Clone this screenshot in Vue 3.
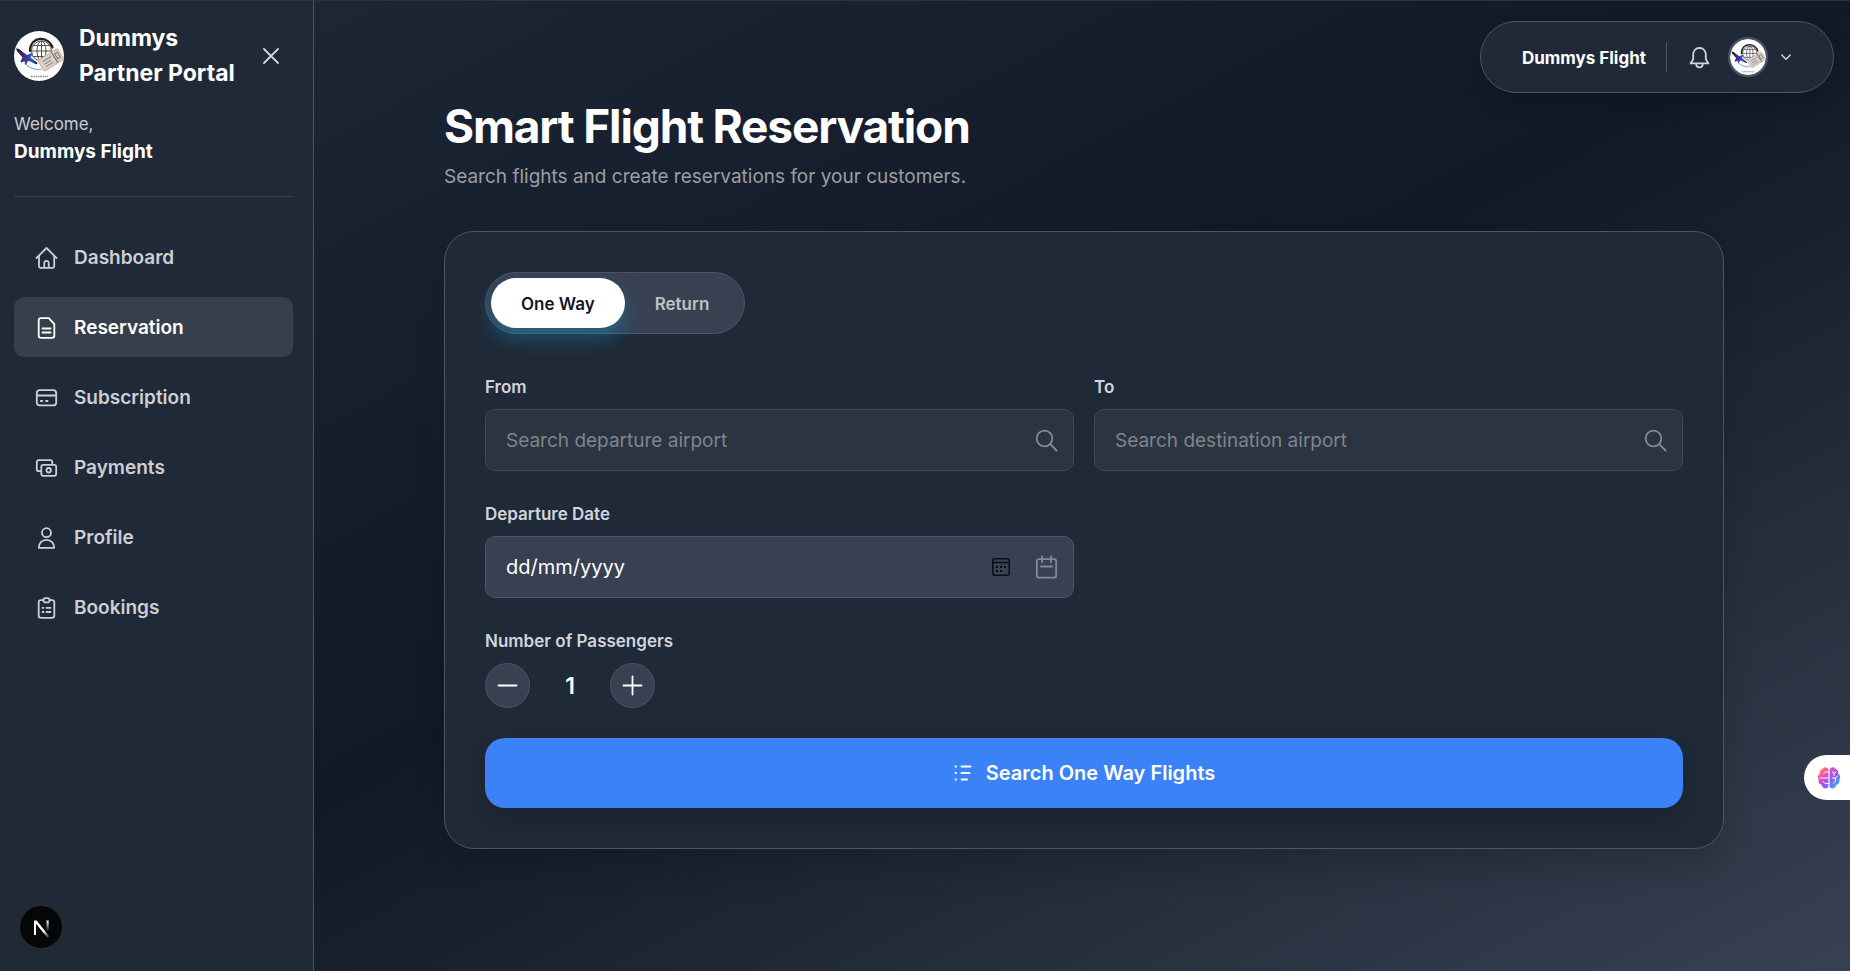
<template>
    <div class="page">
        <aside class="sidebar">
            <div class="brand">
                <svg class="logo" viewBox="0 0 50 50"><use href="#partner-logo" /></svg>
                <div class="brandname">Dummys Partner Portal</div>
                <button class="close" type="button" aria-label="Close menu">
                    <svg width="16" height="16" viewBox="0 0 16 16"><path d="M1 1l14 14M15 1L1 15" /></svg>
                </button>
            </div>
            <div class="welcome">
                <div>Welcome,</div>
                <strong>{{ username }}</strong>
            </div>
            <nav class="menu">
                <a v-for="item in items" :key="item.label" href="#" class="menuitem" :class="{ active: item.label == current }" @click.prevent="current = item.label">
                    <svg width="25" height="25" viewBox="0 0 25 25"><path v-for="d in item.paths" :key="d" :d="d" /></svg>
                    <span>{{ item.label }}</span>
                </a>
            </nav>
        </aside>

        <main class="content">
            <div class="inner">
                <h1>Smart Flight Reservation</h1>
                <p class="subtitle">Search flights and create reservations for your customers.</p>

                <form class="card" @submit.prevent>
                    <div class="toggle">
                        <button type="button" :class="{ selected: trip == 'One Way' }" @click="trip = 'One Way'">One Way</button>
                        <button type="button" :class="{ selected: trip == 'Return' }" @click="trip = 'Return'">Return</button>
                    </div>

                    <div class="fields">
                        <div class="field">
                            <label for="from">From</label>
                            <div class="box">
                                <input id="from" type="text" placeholder="Search departure airport" />
                                <svg width="25" height="25" viewBox="0 0 25 25"><circle cx="10.5" cy="10.5" r="7.8" /><path d="M16.2 16.2l6.3 6.3" /></svg>
                            </div>
                        </div>
                        <div class="field">
                            <label for="to">To</label>
                            <div class="box">
                                <input id="to" type="text" placeholder="Search destination airport" />
                                <svg width="25" height="25" viewBox="0 0 25 25"><circle cx="10.5" cy="10.5" r="7.8" /><path d="M16.2 16.2l6.3 6.3" /></svg>
                            </div>
                        </div>
                        <div class="field">
                            <label for="date">Departure Date</label>
                            <div class="box date">
                                <input id="date" type="text" placeholder="dd/mm/yyyy" />
                                <svg class="picker" width="20" height="20" viewBox="0 0 20 20">
                                    <rect x="1.800" y="1.800" width="16.400" height="16.400" rx="2" />
                                    <path d="M2 5.500h16" />
                                    <path class="dots" d="M5 9h2v2H5zM9 9h2v2H9zM13 9h2v2h-2zM5 13h2v2H5zM9 13h2v2H9z" />
                                </svg>
                                <svg width="25" height="25" viewBox="0 0 25 25"><rect x="2.8" y="4.2" width="19.4" height="18.4" rx="2" /><path d="M8 1.5v5.5M17 1.5v5.5M7 11.5h11" /></svg>
                            </div>
                        </div>
                    </div>

                    <div class="passengers" role="group" aria-labelledby="passengers-label">
                        <div id="passengers-label" class="label">Number of Passengers</div>
                        <div class="stepper">
                            <button type="button" aria-label="Remove passenger" @click="passengers > 1 && passengers--">
                                <svg width="21" height="21" viewBox="0 0 21 21"><path d="M1.5 10.5h18" /></svg>
                            </button>
                            <output>{{ passengers }}</output>
                            <button type="button" aria-label="Add passenger" @click="passengers++">
                                <svg width="21" height="21" viewBox="0 0 21 21"><path d="M1.5 10.5h18M10.5 1.5v18" /></svg>
                            </button>
                        </div>
                    </div>

                    <button class="submit" type="submit">
                        <svg width="20" height="20" viewBox="0 0 20 20"><path d="M2.5 3.5h.6M2.5 10h.6M2.5 16.5h.6M8.5 3.5h9M8.5 10h8M8.5 16.5h5.5" /></svg>
                        <span>Search {{ trip }} Flights</span>
                    </button>
                </form>
            </div>
        </main>

        <header class="account">
            <span class="accountname">{{ username }}</span>
            <button class="bell" type="button" aria-label="Notifications">
                <svg width="25" height="25" viewBox="0 0 25 25">
                    <path d="M12.5 3c-4 0-6.3 3-6.3 6.8v4.4L3.6 18.4h17.8l-2.6-4.2V9.8C18.8 6 16.5 3 12.5 3z" />
                    <path d="M9.2 18.6c0 2.4 1.4 3.8 3.3 3.8s3.3-1.4 3.3-3.8" />
                </svg>
            </button>
            <button class="profile" type="button" aria-label="Account menu">
                <svg class="avatar" viewBox="0 0 50 50"><use href="#partner-logo" /></svg>
                <svg class="chevron" width="10" height="8" viewBox="0 0 10 8"><path d="M.8 2L5 6.2 9.2 2" /></svg>
            </button>
        </header>

        <button class="assistant" type="button" aria-label="Assistant">
            <svg width="24" height="24" viewBox="0 0 24 24">
                <defs>
                    <linearGradient id="brain" x1="0" y1="0" x2="1" y2="1">
                        <stop offset="0.05" stop-color="#ff9a2e" />
                        <stop offset="0.3" stop-color="#f04fb0" />
                        <stop offset="0.55" stop-color="#9a55f7" />
                        <stop offset="0.95" stop-color="#27b4f5" />
                    </linearGradient>
                </defs>
                <path fill="url(#brain)" d="M11.4 3.2C10.4 .6 6.6 .4 5.5 3 3.2 3.4 2.2 5.6 2.9 7.5 .8 8.7 .2 11.8 1.7 13.5 .9 16 2.3 18.3 4.5 18.7 5 22 9.8 24.2 11.4 20.8zM12.6 3.2C13.6 .6 17.4 .4 18.5 3c2.3 .4 3.3 2.6 2.6 4.5 2.1 1.2 2.7 4.3 1.2 6 .8 2.5-.6 4.8-2.8 5.2-.5 3.3-5.3 5.5-6.9 2.1z" />
                <path class="folds" d="M11.4 6H8.5L6.5 8M3 12h8M11.4 17.5H8l-2-2M15.5 5.5l1.5 2 2-1.5M17 7.5v2M15.5 12h3l2-2M18.5 12v3l-2 2" />
            </svg>
        </button>

        <button class="devtools" type="button" aria-label="Open developer tools">
            <svg width="46" height="46" viewBox="0 0 46 46">
                <defs>
                    <linearGradient id="fade-a" x1="0" y1="0" x2="1" y2="1">
                        <stop offset="0.6" stop-color="#fff" />
                        <stop offset="1" stop-color="#fff" stop-opacity="0" />
                    </linearGradient>
                    <linearGradient id="fade-b" x1="0" y1="0" x2="0" y2="1">
                        <stop offset="0" stop-color="#fff" />
                        <stop offset="1" stop-color="#fff" stop-opacity="0" />
                    </linearGradient>
                </defs>
                <circle cx="23" cy="23" r="22" fill="#050608" stroke="#29292b" stroke-width="2" />
                <path fill="url(#fade-a)" d="M16 16.5h2.6l12.9 16-1.9 1.5L18 19.8V31h-2z" />
                <rect fill="url(#fade-b)" x="28.5" y="16.5" width="2.2" height="11" />
            </svg>
        </button>

        <!-- shared artwork: globe, plane and ticket -->
        <svg class="symbols" aria-hidden="true">
            <defs>
                <linearGradient id="plane" x1="0" y1="0" x2="1" y2="0">
                    <stop offset="0" stop-color="#161623" />
                    <stop offset="0.4" stop-color="#4a2b9b" />
                    <stop offset="0.75" stop-color="#2463b8" />
                    <stop offset="1" stop-color="#141c30" />
                </linearGradient>
            </defs>
            <symbol id="partner-logo" viewBox="0 0 50 50">
                <circle cx="25" cy="25" r="25" fill="#fdfdfd" />
                <g fill="none" stroke="#555" stroke-width="1">
                    <circle cx="27.5" cy="20" r="10" />
                    <ellipse cx="27.5" cy="20" rx="4.5" ry="10" />
                    <path d="M27.5 10v20M17.5 20h20M19 14.5h17M19 25.5h17" />
                    <path d="M16 20C16 4.5 35 4.5 38.5 16.5" stroke="#222" stroke-width="2.2" />
                </g>
                <path fill="url(#plane)" d="M2 17.5c2-.5 4 .8 5.5 2.5l5.5 4 4.5-2 1.5 .5-2.5 4 6.5 5c1 1.5 0 2-1.5 1.5l-6.5-3-1.5 .5-1.5 3.5-1-.5-.5-3.5-3 1.5-1-1 2-4L3 20z" />
                <path d="M12 33.5c4 3.5 9 5.5 15 5" fill="none" stroke="#5f87e8" stroke-width="1" stroke-dasharray="2 1" />
                <g transform="rotate(-32 36 28.5)" stroke-width="1">
                    <rect x="25" y="23" width="23" height="12.5" rx="1.5" fill="#d3d3d1" stroke="#f0a579" />
                    <path d="M29 26.5h9M29 29.5h7M29 32.5h8" stroke="#888" />
                    <path d="M41 24v11" stroke="#666" />
                    <rect x="43" y="26" width="3" height="6" fill="none" stroke="#777" />
                </g>
                <path d="M17 45.5h17" stroke="#888" stroke-width="1.5" stroke-linecap="butt" stroke-dasharray="1.5 .8" />
            </symbol>
        </svg>
    </div>
</template>

<script setup>
    import { ref } from 'vue';

    const username = "Dummys Flight";
    const current = ref("Reservation");
    const trip = ref("One Way");
    const passengers = ref(1);

    const items = [
        {
            label: "Dashboard",
            paths: [
                "M2.5 13L12.5 3l10 10",
                "M5 11.5V21q0 1.8 1.8 1.8H18.4q1.8 0 1.8-1.8V11.5",
                "M10.3 22.5V18a2.2 2.2 0 0 1 4.4 0v4.5"
            ]
        },
        {
            label: "Reservation",
            paths: [
                "M7 3.2h7.7l5.6 5.8v11.5q0 2.3-2.3 2.3H7q-2.3 0-2.3-2.3v-15Q4.7 3.2 7 3.2z",
                "M8.5 13.5h8M8.5 17.5h8"
            ]
        },
        {
            label: "Subscription",
            paths: [
                "M5.8 5.2h13.4q3 0 3 3v9.2q0 3-3 3H5.8q-3 0-3-3V8.2q0-3 3-3z",
                "M3 10.5h19M6.7 16h1.6M12 16h1.6"
            ]
        },
        {
            label: "Payments",
            paths: [
                "M18.3 9.5V7.2q0-2-2-2H4.8q-2 0-2 2v7q0 2 2 2H7",
                "M9.3 9.8h10.9q2 0 2 2v7q0 2-2 2H9.3q-2 0-2-2v-7q0-2 2-2z",
                "M14.7 13a2.2 2.2 0 1 1 0 4.5a2.2 2.2 0 1 1 0-4.5"
            ]
        },
        {
            label: "Profile",
            paths: [
                "M12.5 3.2a4.5 4.5 0 1 1 0 9a4.5 4.5 0 1 1 0-9",
                "M4.8 22.8c0-4.5 3-8 7.7-8s7.7 3.5 7.7 8z"
            ]
        },
        {
            label: "Bookings",
            paths: [
                "M9.5 5.2H7q-2.3 0-2.3 2.3v13q0 2.3 2.3 2.3h11q2.3 0 2.3-2.3v-13q0-2.3-2.3-2.3h-2.5",
                "M11.5 3.2h2a2 2 0 0 1 0 4.2h-2a2 2 0 0 1 0-4.2z",
                "M8.5 12.8h1M12.5 12.8h4M8.5 17h1M12.5 17h4"
            ]
        }
    ];
</script>

<style>
    body {
        margin: 0;
        background: #111827;
    }
</style>

<style scoped>
    * {
        box-sizing: border-box;
    }

    .page {
        position: relative;
        display: flex;
        min-height: 100vh;
        border-top: 1px solid #333333;
        background: linear-gradient(to bottom right, #1f2937, #111827, #374151);
        color: #ffffff;
        font-family: Inter, "Liberation Sans", sans-serif;
        font-size: 19px;
    }

    svg {
        display: block;
        flex: none;
        fill: none;
        stroke: currentColor;
        stroke-width: 1.8;
        stroke-linejoin: round;
        stroke-linecap: round;
    }

    button {
        padding: 0;
        border: 0;
        background: none;
        color: inherit;
        font: inherit;
        cursor: pointer;
    }

    .symbols {
        position: absolute;
        width: 0;
        height: 0;
    }

    .sidebar {
        flex: none;
        width: 314px;
        padding: 20px 20px 20px 14px;
        border-right: 1px solid #4b5563;
        background: #202937;
    }

    .brand {
        display: flex;
        align-items: center;
        gap: 15px;
    }

    .logo {
        width: 50px;
        height: 50px;
        stroke: none;
    }

    .brandname {
        flex: 1;
        font-size: 23px;
        font-weight: 700;
        line-height: 35px;
    }

    .close {
        padding: 14px 14px 14px 0;
        color: #d1d5db;
    }

    .welcome {
        padding: 19px 0 30px;
        border-bottom: 1px solid #374151;
        color: #c9ccd1;
        font-size: 17px;
        line-height: 28px;
    }

    .welcome strong {
        display: block;
        color: #ffffff;
        font-size: 19px;
        font-weight: 700;
    }

    .menu {
        display: flex;
        flex-direction: column;
        gap: 10px;
        margin-top: 30px;
    }

    .menuitem {
        display: flex;
        align-items: center;
        gap: 15px;
        height: 60px;
        padding: 0 20px;
        border-radius: 10px;
        color: #cdcfd3;
        font-weight: 600;
        text-decoration: none;
    }

    .menuitem.active {
        background: #383f4c;
        color: #ffffff;
    }

    .content {
        flex: 1;
        min-width: 0;
        padding: 95px 16px 40px 20px;
    }

    .inner {
        max-width: 1280px;
        margin: 0 auto;
    }

    h1 {
        margin: 0;
        font-size: 46px;
        font-weight: 700;
        line-height: 60px;
        letter-spacing: -0.025em;
    }

    .subtitle {
        margin: 6px 0 39px;
        color: #9b9ea3;
        line-height: 30px;
    }

    .card {
        padding: 40px;
        border: 1px solid #4b5563;
        border-radius: 30px;
        background: #202937;
        box-shadow: 0 20px 30px rgba(0, 0, 0, 0.15);
    }

    .toggle {
        display: flex;
        width: fit-content;
        padding: 5px;
        border: 1px solid #4b5563;
        border-radius: 31px;
        background: #384151;
    }

    .toggle button {
        height: 50px;
        padding: 2px 30px 0;
        border-radius: 25px;
        color: #bfc1c5;
        font-size: 17px;
        font-weight: 600;
    }

    .toggle .selected {
        background: #ffffff;
        color: #0f172a;
        box-shadow: 0 10px 20px rgba(14, 165, 233, 0.35);
    }

    .fields {
        display: grid;
        grid-template-columns: 1fr 1fr;
        gap: 30px 20px;
        margin-top: 40px;
    }

    .field label,
    .label {
        display: block;
        color: #d1d5db;
        font-size: 17px;
        font-weight: 600;
        line-height: 27px;
    }

    .box {
        display: flex;
        align-items: center;
        gap: 23px;
        height: 62px;
        margin-top: 8px;
        padding: 0 14px 0 20px;
        border: 1px solid #3f4856;
        border-radius: 10px;
        background: #2b3541;
        color: #858a92;
    }

    .box.date {
        border-color: #4b5563;
        background: #384151;
    }

    .box input {
        flex: 1;
        min-width: 0;
        height: 100%;
        padding: 0;
        border: 0;
        outline: 0;
        background: none;
        color: #ffffff;
        font: inherit;
    }

    .box input::placeholder {
        color: #7f848c;
        opacity: 1;
    }

    .box.date input {
        font-size: 20px;
    }

    .box.date input::placeholder {
        color: #ffffff;
    }

    .picker {
        color: #0c0d10;
        stroke-width: 1.5;
    }

    .picker .dots {
        fill: #0c0d10;
        stroke: none;
    }

    .passengers {
        margin-top: 30px;
    }

    .stepper {
        display: flex;
        align-items: center;
        margin-top: 8px;
    }

    .stepper button {
        display: grid;
        place-items: center;
        width: 45px;
        height: 45px;
        border: 1px solid #4b5563;
        border-radius: 50%;
        background: #384151;
    }

    .stepper output {
        width: 80px;
        font-size: 23px;
        font-weight: 600;
        text-align: center;
    }

    .submit {
        display: flex;
        align-items: center;
        justify-content: center;
        gap: 13px;
        width: 100%;
        height: 70px;
        margin-top: 30px;
        border-radius: 20px;
        background: #3b82f6;
        box-shadow: 0 10px 20px rgba(0, 0, 0, 0.15);
        font-size: 20px;
        font-weight: 600;
    }

    .account {
        position: absolute;
        top: 20px;
        right: 16px;
        display: flex;
        align-items: center;
        height: 72px;
        padding: 0 42px 0 41px;
        border: 1px solid #4b5563;
        border-radius: 36px;
        background: #202937;
        box-shadow: 0 10px 20px rgba(0, 0, 0, 0.15);
    }

    .accountname {
        padding: 2px 20px 0 0;
        border-right: 1px solid #4b5563;
        font-size: 17px;
        font-weight: 700;
        line-height: 28px;
    }

    .bell {
        margin: 0 16px 0 20px;
        color: #d1d5db;
    }

    .profile {
        display: flex;
        align-items: center;
        gap: 13px;
        color: #d1d5db;
    }

    .avatar {
        width: 40px;
        height: 40px;
        border: 2px solid #4b5563;
        border-radius: 50%;
        stroke: none;
    }

    .chevron {
        stroke-width: 1.5;
    }

    .assistant {
        position: absolute;
        top: 754px;
        right: 0;
        display: flex;
        align-items: center;
        width: 46px;
        height: 45px;
        padding-left: 13px;
        border-radius: 23px 0 0 23px;
        background: #ffffff;
    }

    .assistant svg,
    .devtools svg {
        stroke: none;
    }

    .assistant .folds {
        stroke: #ffffff;
        stroke-width: 1;
    }

    .devtools {
        position: absolute;
        bottom: 21px;
        left: 18px;
    }
</style>
